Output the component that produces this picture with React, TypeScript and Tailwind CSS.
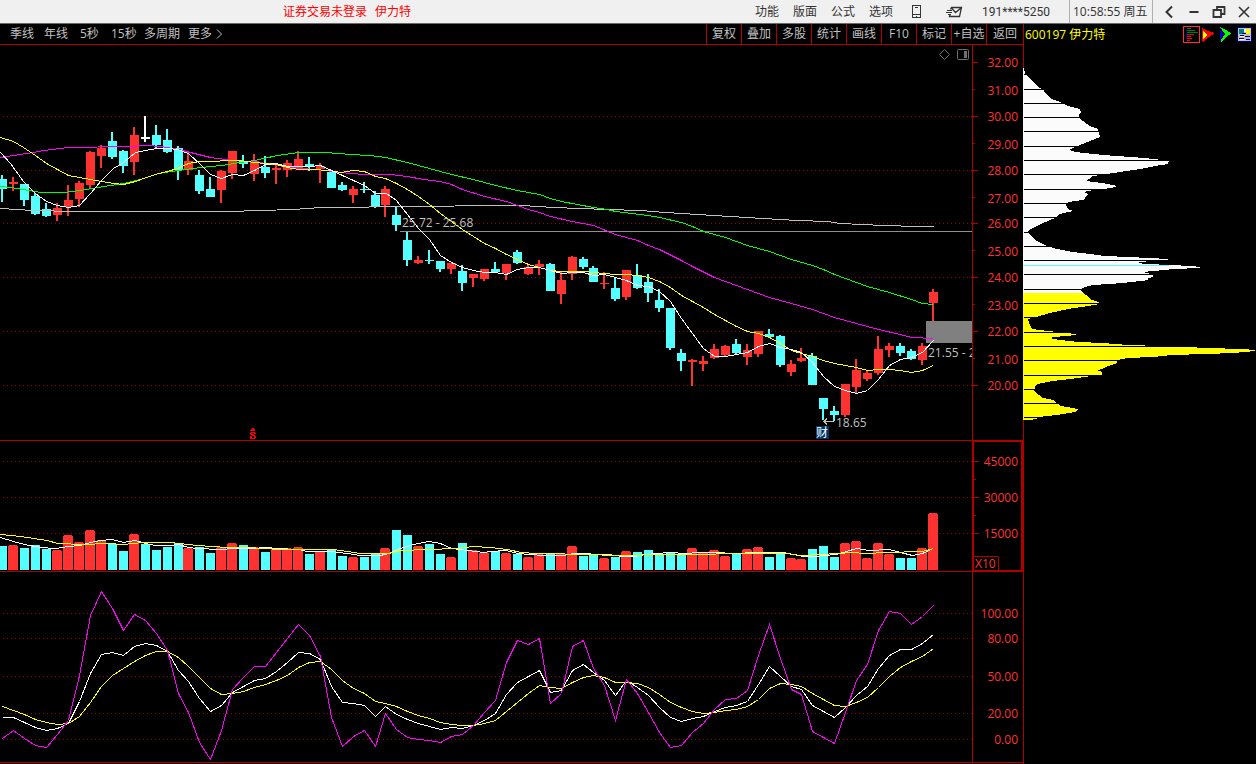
import { ReactNode } from 'react';

type Candle = [string, number, number, number, number];

const RED = '#ff3232';
const CYAN = '#54ffff';
const LINE = '#b00000';
const STEP = 10.9464;

const barLeft = (i: number) => Math.ceil(i * STEP - 2.1285);

// [color, high, body top, body bottom, low]
const candles: Candle[] = [
    ['c', 175, 179, 189, 202], ['r', 177, 182, 184, 191], ['c', 184, 184, 200, 206], ['c', 193, 196, 214, 215],
    ['c', 203, 209, 216, 217], ['r', 203, 208, 215, 221], ['r', 185, 200, 207, 216], ['r', 181, 183, 199, 207],
    ['r', 151, 152, 185, 188], ['r', 145, 148, 156, 168], ['c', 132, 141, 157, 159], ['c', 150, 151, 166, 173],
    ['r', 127, 135, 162, 175], ['w', 116, 137, 139, 142], ['c', 125, 135, 145, 148], ['c', 129, 140, 152, 153],
    ['c', 146, 148, 170, 180], ['r', 151, 161, 170, 175], ['c', 170, 175, 191, 194], ['c', 177, 189, 197, 197],
    ['r', 170, 171, 190, 203], ['r', 151, 151, 173, 179], ['c', 155, 161, 164, 168], ['r', 154, 161, 174, 181],
    ['c', 156, 167, 173, 178], ['r', 165, 168, 170, 184], ['r', 160, 163, 170, 177], ['r', 151, 159, 169, 169],
    ['c', 157, 164, 167, 171], ['r', 163, 166, 169, 183], ['c', 170, 172, 188, 188], ['c', 182, 185, 190, 191],
    ['r', 186, 189, 195, 203], ['c', 182, 189, 190, 193], ['c', 191, 195, 207, 208], ['r', 186, 189, 205, 217],
    ['c', 206, 215, 225, 231], ['c', 232, 240, 260, 266], ['r', 256, 260, 263, 264], ['c', 250, 260, 261, 264],
    ['c', 261, 261, 269, 272], ['r', 263, 263, 269, 274], ['c', 265, 271, 283, 291], ['r', 274, 274, 278, 287],
    ['r', 269, 269, 279, 281], ['c', 262, 269, 272, 273], ['r', 264, 264, 273, 280], ['c', 250, 252, 263, 264],
    ['r', 264, 267, 274, 275], ['r', 260, 264, 267, 275], ['c', 263, 264, 291, 291], ['r', 272, 280, 294, 304],
    ['r', 256, 257, 274, 280], ['c', 257, 259, 267, 269], ['c', 266, 268, 282, 282], ['r', 272, 283, 284, 289],
    ['c', 277, 288, 299, 301], ['r', 270, 270, 297, 300], ['c', 264, 275, 288, 289], ['c', 274, 282, 293, 302],
    ['c', 289, 300, 308, 312], ['c', 308, 308, 348, 350], ['c', 349, 353, 361, 371], ['r', 359, 360, 362, 386],
    ['r', 356, 361, 364, 371], ['r', 344, 349, 358, 359], ['r', 345, 346, 355, 356], ['c', 339, 344, 353, 354],
    ['r', 344, 350, 357, 365], ['r', 331, 331, 354, 357], ['c', 329, 334, 337, 338], ['c', 335, 336, 365, 367],
    ['r', 360, 364, 372, 376], ['r', 348, 358, 361, 362], ['c', 353, 356, 385, 385], ['c', 398, 398, 409, 420],
    ['c', 406, 411, 415, 421], ['r', 384, 384, 415, 417], ['r', 359, 370, 387, 393], ['r', 370, 373, 379, 381],
    ['r', 336, 349, 373, 375], ['r', 343, 346, 350, 357], ['c', 343, 346, 353, 356], ['c', 349, 351, 359, 360],
    ['r', 343, 346, 360, 365], ['r', 289, 292, 303, 321],
];

const volumeTops = [
    546, 545, 548, 545, 549, 550, 535, 542, 530, 540, 544, 551, 534, 544, 550, 547, 543, 548, 547, 553, 547, 543,
    545, 547, 552, 548, 548, 547, 554, 551, 549, 556, 557, 557, 553, 548, 530, 535, 546, 544, 554, 557, 543, 550,
    552, 551, 553, 554, 557, 554, 553, 553, 546, 556, 554, 558, 557, 551, 552, 550, 554, 553, 554, 548, 552, 550,
    556, 554, 549, 547, 557, 553, 558, 559, 549, 546, 557, 543, 541, 558, 543, 554, 558, 558, 548, 513,
];

const ma5 = '0,152 10,163 23,181 35,193 46,201 57,205 68,207 79,205 90,193 101,180 113,168 123,162 135,152 145,150 156,148 167,148 177,149 188,153 200,164 210,174 221,178 232,174 243,175 254,170 265,164 276,163 287,166 298,166 310,166 320,165 331,170 342,175 353,180 364,185 375,193 386,193 396,200 407,214 418,228 429,239 440,255 451,262 462,267 473,270 484,272 495,272 506,274 517,269 528,267 539,267 550,270 561,273 572,272 583,272 593,275 604,274 615,277 626,280 637,285 648,286 659,291 670,301 681,318 692,333 703,348 714,356 725,356 736,354 747,352 758,346 769,343 780,347 791,349 801,352 812,362 823,376 834,386 845,390 856,393 867,390 878,379 889,365 900,359 911,357 922,352 933,340';
const ma10 = '0,137 13,141 23,147 35,155 46,163 57,169 68,175 79,177 90,179 101,181 113,183 123,184 135,181 146,177 158,173 167,171 177,168 188,163 200,161 213,161 227,160 240,160 254,162 265,163 276,164 287,167 298,169 310,169 330,170 340,172 353,170 364,171 375,176 385,178 396,183 407,189 418,196 429,204 440,213 451,221 462,229 473,236 484,243 495,248 506,254 517,259 528,264 539,267 550,270 561,271 572,271 583,271 593,272 604,273 615,274 626,274 637,275 648,277 659,281 670,287 681,295 692,301 703,307 714,314 725,320 736,326 747,331 758,333 769,337 780,343 791,350 801,353 812,356 823,360 834,363 845,365 856,367 867,370 878,369 889,369 900,370 911,372 922,370 933,365';
const ma30 = '0,157 13,155 33,152 43,150 68,147 127,146 147,145 160,146 178,149 190,152 210,157 232,160 254,161 265,163 283,166 300,168 317,169 340,172 363,174 390,174 407,176 423,179 440,181 451,184 462,189 484,196 506,201 517,205 528,209 539,212 550,216 572,221 593,225 615,234 637,240 648,245 659,249 681,260 692,266 714,277 736,285 747,289 769,297 791,303 812,309 834,317 856,323 878,329 900,334 911,337 933,338';
const ma60 = '0,186 10,187 23,189 40,192 63,192 80,190 97,187 123,183 140,179 158,173 178,170 200,167 221,165 240,162 254,160 277,155 298,152 323,152 340,153 348,154 370,155 385,157 407,162 429,168 451,174 473,179 495,185 517,190 539,194 550,198 561,201 593,207 607,209 615,211 648,215 659,217 681,222 692,226 703,231 714,234 725,237 747,245 769,251 791,259 812,265 823,269 834,274 845,278 867,286 889,292 911,299 922,303 933,304';
const ma250 = '0,208 33,210 73,211 227,211 260,210 293,209 320,207 348,207 390,206 521,205 553,207 580,208 607,209 640,210 665,212 697,214 730,216 763,218 797,220 827,221 840,223 883,225 917,226 933,226';

const vma5 = '0,537 13,541 24,544 40,547 55,548 68,546 80,545 90,542 100,540 112,539 123,542 135,540 145,543 155,545 170,545 178,544 188,547 197,548 220,549 233,548 253,548 265,547 277,548 298,549 307,551 330,551 347,553 360,555 380,555 388,553 400,548 413,544 428,541 440,543 451,548 467,550 483,552 490,551 505,550 518,553 528,554 545,555 562,555 574,553 607,554 623,556 633,556 645,554 669,552 686,553 697,552 717,552 731,553 759,552 783,552 793,554 803,556 815,556 824,555 836,554 846,551 856,548 869,550 889,549 900,552 912,555 922,553 933,548';
const vma10 = '0,534 20,536 47,540 57,543 83,544 107,543 123,544 143,542 170,542 197,545 227,547 247,547 280,549 333,549 347,551 360,553 388,553 400,550 427,549 457,548 473,546 490,547 507,549 521,552 535,553 593,554 609,555 631,555 655,554 700,554 731,553 786,553 800,555 821,554 852,552 865,553 886,552 922,551 933,548';

const kLine = [
    717, 717, 722, 727, 730, 728, 723, 701, 673, 654, 652, 655, 646, 643, 645, 651, 670, 681, 698, 711, 705, 692,
    686, 680, 678, 671, 662, 652, 653, 659, 686, 702, 703, 705, 716, 706, 714, 719, 723, 726, 729, 727, 728, 725,
    720, 713, 694, 682, 676, 670, 692, 690, 670, 664, 672, 680, 695, 680, 687, 695, 707, 717, 721, 718, 716, 711,
    707, 705, 701, 684, 666, 676, 686, 689, 705, 711, 717, 707, 695, 686, 668, 655, 649, 649, 643, 634,
];
const dLine = [
    706, 710, 714, 719, 722, 724, 723, 716, 702, 686, 675, 668, 661, 655, 651, 651, 657, 666, 677, 688, 694, 693,
    691, 687, 684, 680, 675, 667, 662, 661, 669, 680, 688, 693, 701, 703, 706, 711, 715, 718, 722, 724, 725, 725,
    723, 720, 711, 702, 693, 685, 687, 688, 682, 677, 675, 677, 682, 682, 683, 687, 694, 702, 707, 711, 713, 712,
    710, 709, 706, 699, 688, 683, 684, 686, 693, 699, 705, 706, 702, 697, 687, 676, 667, 661, 656, 648,
];
const jLine = [
    738, 730, 738, 745, 747, 734, 720, 675, 615, 591, 608, 630, 614, 620, 633, 650, 693, 712, 742, 759, 730, 689,
    677, 666, 666, 652, 638, 624, 635, 656, 717, 746, 736, 730, 746, 713, 729, 737, 739, 740, 742, 736, 734, 725,
    712, 700, 662, 640, 644, 638, 703, 693, 646, 640, 668, 685, 720, 679, 693, 712, 732, 747, 745, 732, 723, 709,
    699, 698, 690, 655, 624, 658, 689, 694, 731, 737, 743, 712, 680, 664, 630, 611, 613, 624, 616, 605,
];

// chip distribution outline, [width, y]
const chipsAbove = '0,68 1,68 2,73 9,81 17,88 21,90 22,93 28,99 37,102 45,106 57,109 58,112 56,115 56,118 60,121 67,126 75,129 76,132 77,137 72,139 62,143 52,147 46,150 52,152 70,154 92,156 110,157 131,159 146,161 145,164 132,166 117,169 97,172 84,174 70,176 66,179 63,181 79,183 94,186 89,188 70,190 61,192 65,194 62,198 60,200 45,202 43,205 45,209 50,211 37,214 32,218 20,223 10,228 5,231 7,235 14,241 24,246 34,249 50,252 67,254 82,256 105,257 126,258 145,259 145,260 127,261 112,263 125,264 146,265 169,266 177,267 177,268 150,269 142,270 119,272 124,273 130,275 130,277 123,279 126,280 100,283 70,285 59,288 58,290 60,293 0,293';
const chipsBelow = '0,293 60,293 63,295 67,299 75,302 77,304 65,306 45,309 27,313 13,317 9,318 5,319 7,325 9,329 17,330 34,332 43,333 53,334 53,335 32,337 26,338 37,340 56,342 79,343 105,345 139,346 139,347 162,347 185,348 219,349 232,350 232,351 210,353 183,354 148,355 130,357 104,358 94,360 94,363 85,366 79,369 74,370 79,372 79,375 69,376 47,379 29,381 14,384 12,387 11,391 20,398 30,400 34,403 37,406 44,407 55,409 55,410 52,412 34,415 15,417 13,419 6,420 0,420';
const chipRows = [74, 89, 103, 117, 131, 146, 160, 174, 189, 203, 217, 232, 246, 260, 274, 289, 303, 317, 332, 346, 360, 375, 389, 403, 417];

const periods = [
    { label: '季线', className: 'w-[34px]' },
    { label: '年线', className: 'w-[36px]' },
    { label: '5秒', className: 'w-[31px]' },
    { label: '15秒', className: 'w-[33px]' },
    { label: '多周期', className: 'w-[44px]' },
    { label: '更多', className: 'w-[28px]' },
];
const tools = ['复权', '叠加', '多股', '统计', '画线', 'F10', '标记', '+自选', '返回'];
const menus = ['功能', '版面', '公式', '选项'];

const indexPoints = (values: number[]) => values.map((y, i) => `${barLeft(i) + 4},${y}`).join(' ');

function Grid({ rows }: { rows: number[] }) {
    return (
        <g stroke="#a00000" strokeDasharray="1 3">
            {rows.map((y) => (
                <line key={y} x1="3" x2="100%" y1={y + 0.5} y2={y + 0.5} />
            ))}
        </g>
    );
}

function Curve({ points, color }: { points: string; color: string }) {
    return <polyline points={points} fill="none" stroke={color} transform="translate(0.5 0.5)" />;
}

function AxisLabels({ x, items }: { x: number; items: [string, number][] }) {
    return (
        <g fill={RED} textAnchor="end">
            {items.map(([label, y]) => (
                <text key={label} x={x} y={y + 5}>{label}</text>
            ))}
        </g>
    );
}

function Ticks({ major, minor }: { major: number[]; minor: number[] }) {
    return (
        <g fill={LINE}>
            {major.map((y) => <rect key={y} x="0" y={y} width="5" height="1" />)}
            {minor.map((y) => <rect key={y} x="0" y={y} width="2" height="1" />)}
        </g>
    );
}

function WindowButton({ label, children }: { label: string; children: ReactNode }) {
    return (
        <button type="button" aria-label={label} className="flex h-full w-[25px] items-center justify-center">
            <svg width="14" height="14" fill="none" stroke="#333" strokeWidth="2">{children}</svg>
        </button>
    );
}

function TitleBar() {
    return (
        <header className="flex h-6 items-center justify-between border-b border-[#696969] bg-[#f0f0f0] text-[#333]">
            <div className="flex gap-2 pl-[283px] text-[#f00]">
                <span>证券交易未登录</span>
                <span>伊力特</span>
            </div>
            <div className="flex h-full items-center">
                <nav className="flex gap-[14px]">
                    {menus.map((m) => <button key={m} type="button">{m}</button>)}
                </nav>
                <button type="button" aria-label="手机" className="ml-[18px]">
                    <svg width="11" height="14" fill="none" stroke="#333" shapeRendering="crispEdges">
                        <rect x="1.5" y="0.5" width="8" height="12" />
                        <path d="M4 2.5h3M2 9.5h7M5 11.5h1" />
                    </svg>
                </button>
                <button type="button" aria-label="消息" className="ml-6">
                    <svg width="17" height="12" fill="none" stroke="#333">
                        <path d="M4.5 3.5L5.500 1.500H15.500L13.500 10.500H3.500L4 8.500M5.500 2L9.500 6.500L15 2" strokeWidth="1.300" />
                        <path d="M1 4.500H6M0 6.500H6M2 8.500H5" />
                    </svg>
                </button>
                <span className="ml-[19px] w-[69px] font-[Roboto]">191****5250</span>
                <time className="ml-[18px] flex h-full w-[84px] items-center border-x border-[#b0b0b0] pl-[3px] whitespace-nowrap">
                    10:58:55 周五
                </time>
                <div className="ml-[3px] flex h-full">
                    <WindowButton label="收起"><path d="M10 1.500L4.500 7L10 12.500" /></WindowButton>
                    <WindowButton label="最小化"><path d="M2.500 7H11.500" /></WindowButton>
                    <WindowButton label="还原">
                        <path d="M1.500 5H9V12H1.500ZM5 5V2H12.500V9H9" strokeWidth="1.800" />
                    </WindowButton>
                    <WindowButton label="关闭"><path d="M2 2L12 12M12 2L2 12" strokeWidth="1.600" /></WindowButton>
                </div>
            </div>
        </header>
    );
}

function Toolbar() {
    return (
        <div className="flex h-[21px] justify-between border-b border-[#b00000] text-[#c0c0c0]">
            <div className="flex items-center pl-[10px]">
                {periods.map((p) => (
                    <button key={p.label} type="button" className={`${p.className} text-left whitespace-nowrap`}>
                        {p.label}
                    </button>
                ))}
                <svg width="7" height="10" fill="none" stroke="#c0c0c0"><path d="M1 0.500L5.500 5L1 9.500" /></svg>
            </div>
            <div className="flex">
                {tools.map((tool) => (
                    <button key={tool} type="button" className="w-[35px] border-l border-[#b00000] text-center whitespace-nowrap last:w-[37px]">
                        {tool}
                    </button>
                ))}
            </div>
        </div>
    );
}

function PricePane() {
    return (
        <section className="flex h-[396px] border-b border-[#b00000]">
            <svg className="h-full min-w-0 flex-1" shapeRendering="crispEdges">
                <g transform="translate(0 -45)">
                    <Grid rows={[116, 170, 223, 277, 331, 385]} />
                    <rect x="926" y="321" width="100%" height="22" fill="#808080" />
                    {candles.map(([kind, high, top, bottom, low], i) => {
                        const left = barLeft(i);
                        const fill = kind === 'r' ? RED : kind === 'c' ? CYAN : '#fff';
                        return (
                            <g key={i} fill={fill}>
                                <rect x={left + 3} y={high} width="2" height={low - high} />
                                <rect x={left} y={top} width="9" height={Math.max(bottom - top, 1)} />
                            </g>
                        );
                    })}
                    <rect x="400" y="231" width="100%" height="1" fill="#909090" />
                    <Curve points={ma250} color="#c0c0c0" />
                    <Curve points={ma60} color="#0f0" />
                    <Curve points={ma30} color="#f0f" />
                    <Curve points={ma10} color="#ff0" />
                    <Curve points={ma5} color="#fff" />
                    <g fill="#c0c0c0">
                        <text x="402" y="227">25.72 - 25.68</text>
                        <text x="928" y="357">21.55 - 2</text>
                        <text x="836" y="427">18.65</text>
                    </g>
                    <path d="M834 421.500H824M827 418.500L824 421.500L827 424.500" fill="none" stroke="#c0c0c0" />
                    <rect x="816" y="426" width="13" height="13" fill="#003366" />
                    <text x="816" y="437" fill="#fff">财</text>
                    {/* 除权标记 */}
                    <path d="M252 428h2v1h-2zM251 429h4v1h-4zM250 430h5v1h-5zM251 432h4v1h-4zM250 433h2v2h-2zM254 433h2v1h-2zM251 434h3v1h-3zM252 435h3v1h-3zM254 436h2v2h-2zM250 436h2v2h-2zM250 438h5v1h-5z" fill="#f00" />
                    <path d="M939.500 54.500L944.500 49.500L949.500 54.500L944.500 59.500Z" fill="none" stroke="#707070" shapeRendering="auto" />
                    <g shapeRendering="auto">
                        <rect x="957.500" y="49.500" width="11" height="10" rx="1" fill="none" stroke="#707070" />
                        <rect x="964" y="51" width="3" height="7" fill="#707070" />
                    </g>
                </g>
            </svg>
            <div className="w-[51px] border-l border-[#b00000]">
                <svg className="h-full w-full">
                    <g transform="translate(0 -45)">
                        <Ticks major={[62, 116, 170, 223, 277, 331, 385]} minor={[89, 143, 197, 250, 304, 358]} />
                        <AxisLabels
                            x={45}
                            items={[
                                ['32.00', 62], ['31.00', 90], ['30.00', 116], ['29.00', 144], ['28.00', 170],
                                ['27.00', 198], ['26.00', 223], ['25.00', 251], ['24.00', 277], ['23.00', 305],
                                ['22.00', 331], ['21.00', 359], ['20.00', 385],
                            ]}
                        />
                    </g>
                </svg>
            </div>
        </section>
    );
}

function VolumePane() {
    return (
        <section className="flex h-[131px] border-b border-[#b00000]">
            <svg className="h-full min-w-0 flex-1" shapeRendering="crispEdges">
                <g transform="translate(0 -441)">
                    <Grid rows={[461, 497, 533]} />
                    {volumeTops.map((top, i) => {
                        const left = barLeft(i);
                        return candles[i][0] === 'r' ? (
                            <g key={i} fill={RED}>
                                <rect x={left} y={top} width="8" height="1" />
                                <rect x={left - 1} y={top + 1} width="10" height={569 - top} />
                            </g>
                        ) : (
                            <rect key={i} x={left} y={top} width="9" height={570 - top} fill={CYAN} />
                        );
                    })}
                    <Curve points={vma5} color="#fff" />
                    <Curve points={vma10} color="#ff0" />
                </g>
            </svg>
            <div className="w-[51px] border-x-2 border-y border-[#b00000]">
                <svg className="h-full w-full overflow-visible">
                    <g transform="translate(0 -442)">
                        <Ticks major={[461, 497, 533]} minor={[479, 515]} />
                        <AxisLabels x={44} items={[['45000', 461], ['30000', 497], ['15000', 533]]} />
                        <path d="M0 556.500H24.500V570" fill="none" stroke={LINE} />
                        <text x="1" y="568" fill={RED}>X10</text>
                    </g>
                </svg>
            </div>
        </section>
    );
}

function KdjPane() {
    return (
        <section className="flex h-[191px] border-b border-[#b00000]">
            <svg className="h-full min-w-0 flex-1" shapeRendering="crispEdges">
                <g transform="translate(0 -572)">
                    <Grid rows={[613, 638, 676, 713, 739]} />
                    <Curve points={indexPoints(kLine)} color="#fff" />
                    <Curve points={indexPoints(dLine)} color="#ff0" />
                    <Curve points={indexPoints(jLine)} color="#f0f" />
                </g>
            </svg>
            <div className="w-[51px] border-l border-[#b00000]">
                <svg className="h-full w-full">
                    <g transform="translate(0 -572)">
                        <AxisLabels x={45} items={[['100.00', 613], ['80.00', 638], ['50.00', 676], ['20.00', 713], ['0.00', 739]]} />
                    </g>
                </svg>
            </div>
        </section>
    );
}

function ChipPanel() {
    return (
        <aside className="flex w-[233px] flex-col border-l border-[#b00000]">
            <div className="flex h-[21px] items-center justify-between pr-1 pl-px text-[#ff0]">
                <h1>600197 伊力特</h1>
                <div className="flex items-center gap-[2px]">
                    <button type="button" aria-label="筹码分布">
                        <svg width="17" height="17" shapeRendering="crispEdges">
                            <rect x="0.500" y="0.500" width="16" height="16" fill="none" stroke={RED} />
                            <path d="M3 2h1v13h-1z" fill="#000080" />
                            <path d="M4 2h4v1h-4zM4 4h8v1h-8zM4 6h11v1h-11z" fill="#008000" />
                            <path d="M4 8h7v1h-7zM4 10h4v1h-4zM4 12h5v1h-5zM4 14h3v1h-3z" fill="#f00" />
                        </svg>
                    </button>
                    <button type="button" aria-label="火焰山">
                        <svg width="15" height="16" shapeRendering="crispEdges">
                            <path d="M0 13h1v2h-1z" fill="#0000c0" />
                            <path d="M0 1L4 3L12 6V7L5 11L1 15L0 12Z" fill="#f00" />
                            <path d="M1 4L4 6L5 8L1 12Z" fill="#ff0" />
                        </svg>
                    </button>
                    <button type="button" aria-label="活跃度">
                        <svg width="16" height="16" shapeRendering="crispEdges">
                            <path d="M1 1h1v14h-1zM1 3L5 7L2 12Z" fill="#0000c0" />
                            <path d="M1 0L5 2L12 6V7L7 10L2 15V13L6 7Z" fill="#0f0" />
                        </svg>
                    </button>
                    <button type="button" aria-label="设置">
                        <svg width="15" height="15" shapeRendering="crispEdges">
                            <rect x="0.500" y="0.500" width="14" height="14" fill="#c0c0c0" stroke="#000080" />
                            <path d="M2 2h5v5h-5z" fill="#008080" />
                            <path d="M7 2h3v3h-3z" fill="#fff" />
                            <path d="M9 2h4v5h-4z" fill="#ff0" />
                            <path d="M5 6h4v1h-4zM3 8h4v1h-4zM8 9h5v1h-5zM2 11h5v1h-5zM9 12h4v1h-4z" fill="#000080" />
                            <path d="M3 9h4v1h-4zM3 12h4v1h-4z" fill="#fff" />
                        </svg>
                    </button>
                </div>
            </div>
            <svg className="-ml-px h-[719px] w-[233px]" shapeRendering="crispEdges">
                <g transform="translate(0 -45)">
                    <polygon points={chipsAbove} fill="#fbfbfb" />
                    <polygon points={chipsBelow} fill="#ff0" />
                    <rect x="0" y="265" width="146" height="1" fill={CYAN} />
                    {chipRows.map((y) => <rect key={y} x="1" y={y} width="232" height="1" fill="#000" />)}
                </g>
            </svg>
        </aside>
    );
}

export default function App() {
    return (
        <div className="min-h-screen overflow-hidden bg-black font-['Open_Sans','Noto_Sans_CJK_SC',sans-serif] text-[12px] leading-[18px]">
            <TitleBar />
            <main className="flex">
                <div className="min-w-0 flex-1">
                    <Toolbar />
                    <PricePane />
                    <VolumePane />
                    <KdjPane />
                </div>
                <ChipPanel />
            </main>
        </div>
    );
}
